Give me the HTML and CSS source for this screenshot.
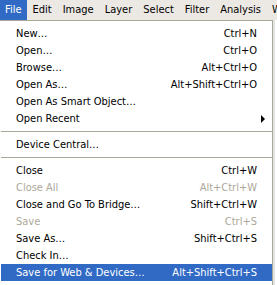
FILE: index.html
```html
<!DOCTYPE html>
<html>
<head>
<meta charset="utf-8">
<link rel="stylesheet" href="styles.css">
</head>
<body>
<div class="menubar">
  <span class="mb-item active">File</span>
  <span class="mb-item">Edit</span>
  <span class="mb-item">Image</span>
  <span class="mb-item">Layer</span>
  <span class="mb-item">Select</span>
  <span class="mb-item">Filter</span>
  <span class="mb-item">Analysis</span>
  <span class="mb-item">Window</span>
</div>
<div class="menu">
  <div class="item"><span>New…</span><span>Ctrl+N</span></div>
  <div class="item"><span>Open…</span><span>Ctrl+O</span></div>
  <div class="item"><span>Browse…</span><span>Alt+Ctrl+O</span></div>
  <div class="item"><span>Open As…</span><span>Alt+Shift+Ctrl+O</span></div>
  <div class="item"><span>Open As Smart Object…</span><span></span></div>
  <div class="item"><span>Open Recent</span><span class="arrow"></span></div>
  <div class="sep"></div>
  <div class="item"><span>Device Central…</span><span></span></div>
  <div class="sep"></div>
  <div class="item"><span>Close</span><span>Ctrl+W</span></div>
  <div class="item disabled"><span>Close All</span><span>Alt+Ctrl+W</span></div>
  <div class="item"><span>Close and Go To Bridge…</span><span>Shift+Ctrl+W</span></div>
  <div class="item disabled"><span>Save</span><span>Ctrl+S</span></div>
  <div class="item"><span>Save As…</span><span>Shift+Ctrl+S</span></div>
  <div class="item"><span>Check In…</span><span></span></div>
  <div class="item selected"><span>Save for Web &amp; Devices…</span><span>Alt+Shift+Ctrl+S</span></div>
</div>
</body>
</html>
```

FILE: styles.css
```css
html, body {
  margin: 0;
  padding: 0;
  background: #ffffff;
  overflow: hidden;
}
body {
  width: 277px;
  height: 285px;
  font-family: "DejaVu Sans Condensed", "Liberation Sans", sans-serif;
  font-size: 11px;
  color: #000;
}
.menubar {
  display: flex;
  height: 20px;
  background: #ece9e4;
  white-space: nowrap;
  overflow: hidden;
}
.mb-item {
  padding: 0 6px 0 5px;
  line-height: 20px;
}
.mb-item.active {
  background: #316ac5;
  color: #fff;
}
.menu {
  width: 273px;
  border-top: 1px solid #aca899;
  border-right: 1px solid #aca899;
  box-shadow: 2px 0 0 #e4e4e4;
  padding: 4px 0 0 1px;
  box-sizing: border-box;
  height: 265px;
  background: #fff;
}
.item {
  display: flex;
  justify-content: space-between;
  align-items: center;
  height: 17px;
  padding: 0 15px 0 15px;
  white-space: nowrap;
}
.item.disabled {
  color: #aca899;
}
.item.selected {
  background: #316ac5;
  color: #fff;
}
.sep {
  height: 9px;
  display: flex;
  align-items: center;
}
.sep::before {
  content: "";
  display: block;
  width: 100%;
  height: 1px;
  background: #aca899;
}
.arrow {
  width: 0;
  height: 0;
  border-top: 4px solid transparent;
  border-bottom: 4px solid transparent;
  border-left: 4px solid #000;
  margin-right: -8px;
}
```
